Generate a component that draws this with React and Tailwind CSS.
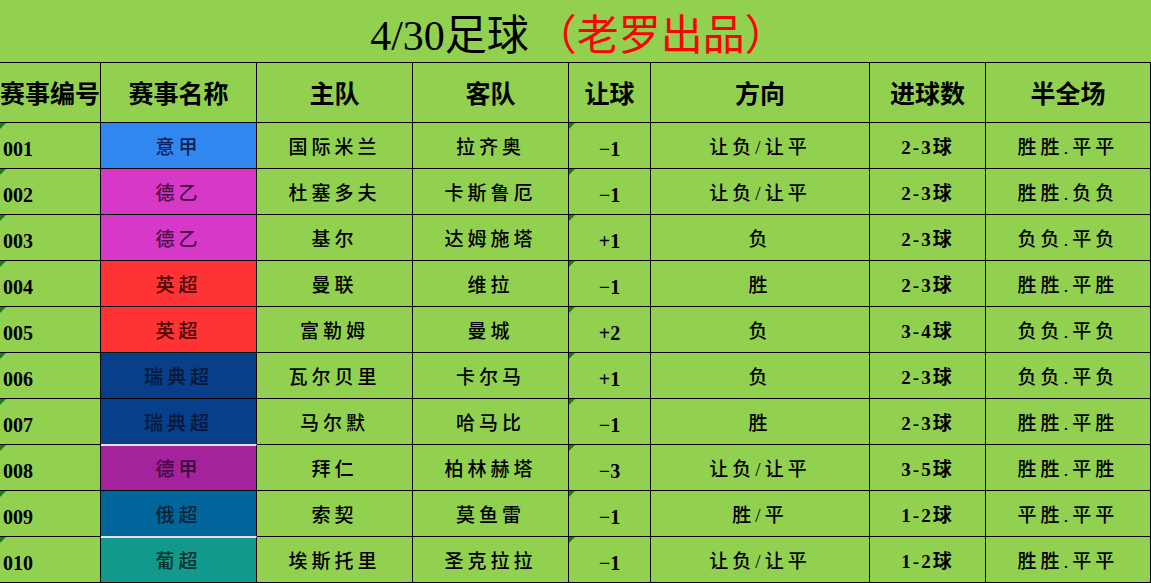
import React from 'react';

const rows = [
  { id: '001', league: '意甲', bg: 'bg-[#3087ef]', fg: 'text-[#0e1f55]', home: '国际米兰', away: '拉齐奥', hc: '-1', dir: '让负/让平', goals: '2-3球', hf: '胜胜.平平' },
  { id: '002', league: '德乙', bg: 'bg-[#d638c7]', fg: 'text-[#4a0b44]', home: '杜塞多夫', away: '卡斯鲁厄', hc: '-1', dir: '让负/让平', goals: '2-3球', hf: '胜胜.负负' },
  { id: '003', league: '德乙', bg: 'bg-[#d638c7]', fg: 'text-[#4a0b44]', home: '基尔', away: '达姆施塔', hc: '+1', dir: '负', goals: '2-3球', hf: '负负.平负' },
  { id: '004', league: '英超', bg: 'bg-[#ff3333]', fg: 'text-[#4a0808]', home: '曼联', away: '维拉', hc: '-1', dir: '胜', goals: '2-3球', hf: '胜胜.平胜' },
  { id: '005', league: '英超', bg: 'bg-[#ff3333]', fg: 'text-[#4a0808]', home: '富勒姆', away: '曼城', hc: '+2', dir: '负', goals: '3-4球', hf: '负负.平负' },
  { id: '006', league: '瑞典超', bg: 'bg-[#073f8b]', fg: 'text-[#06183a]', home: '瓦尔贝里', away: '卡尔马', hc: '+1', dir: '负', goals: '2-3球', hf: '负负.平负' },
  { id: '007', league: '瑞典超', bg: 'bg-[#073f8b]', fg: 'text-[#06183a]', home: '马尔默', away: '哈马比', hc: '-1', dir: '胜', goals: '2-3球', hf: '胜胜.平胜' },
  { id: '008', league: '德甲', bg: 'bg-[#a5229d]', fg: 'text-[#3d0639]', home: '拜仁', away: '柏林赫塔', hc: '-3', dir: '让负/让平', goals: '3-5球', hf: '胜胜.平胜', light: true },
  { id: '009', league: '俄超', bg: 'bg-[#01669b]', fg: 'text-[#04243a]', home: '索契', away: '莫鱼雷', hc: '-1', dir: '胜/平', goals: '1-2球', hf: '平胜.平平' },
  { id: '010', league: '葡超', bg: 'bg-[#119a8b]', fg: 'text-[#06302b]', home: '埃斯托里', away: '圣克拉拉', hc: '-1', dir: '让负/让平', goals: '1-2球', hf: '胜胜.平平', light: true },
];

const headers = ['赛事编号', '赛事名称', '主队', '客队', '让球', '方向', '进球数', '半全场'];

const Flag = () => (
  <span className="absolute left-0 top-0 h-0 w-0 border-t-[6px] border-r-[6px] border-t-[#1f7a1f] border-r-transparent"></span>
);

export default function App() {
  const cell = 'flex items-center justify-center border-r border-b border-black whitespace-nowrap';
  return (
    <div
      className="w-[1151px] h-[583px] overflow-hidden bg-[#92d050] text-black"
      style={{ fontFamily: '"Liberation Serif", "Noto Sans CJK SC", serif' }}
    >
      {/* Title */}
      <div className="h-[62px] flex items-center justify-center pt-[10px] pl-[6px] text-[42px] leading-none">
        <span>4/30足球</span>
        <span className="text-[#ff0000] ml-[6px]">（老罗出品）</span>
      </div>

      <div className="grid grid-cols-[101px_156px_156px_156px_82px_219px_116px_165px] grid-rows-[60px_repeat(10,46px)] border-t border-black">
        {headers.map((h, i) => (
          <div key={h} className={`${cell} pt-[4px] text-[25px] font-semibold ${i === 0 ? 'justify-start overflow-hidden' : ''}`}>
            {h}
          </div>
        ))}

        {rows.map((r) => (
          <React.Fragment key={r.id}>
            <div className={`${cell} relative justify-start pl-[3px] pt-[6px] text-[20px] font-bold`}>
              <Flag />
              {r.id}
            </div>
            <div className={`${cell} ${r.bg} ${r.fg} pt-[5px] text-[19px] font-medium tracking-[4px] ${r.light ? 'border-t-[2px] border-t-[#e6e0f5] -mt-[1px]' : ''}`}>
              {r.league}
            </div>
            <div className={`${cell} pt-[5px] text-[19px] font-medium tracking-[4px]`}>{r.home}</div>
            <div className={`${cell} pt-[5px] text-[19px] font-medium tracking-[4px]`}>{r.away}</div>
            <div className={`${cell} relative pt-[6px] text-[20px] font-bold`}>
              <Flag />
              {r.hc.replace('-', '−')}
            </div>
            <div className={`${cell} pt-[5px] text-[19px] font-medium tracking-[4px]`}>{r.dir}</div>
            <div className={`${cell} pt-[6px] text-[19px] font-bold tracking-[2px]`}>{r.goals}</div>
            <div className={`${cell} pt-[5px] text-[19px] font-medium tracking-[4px]`}>{r.hf}</div>
          </React.Fragment>
        ))}
      </div>
    </div>
  );
}
